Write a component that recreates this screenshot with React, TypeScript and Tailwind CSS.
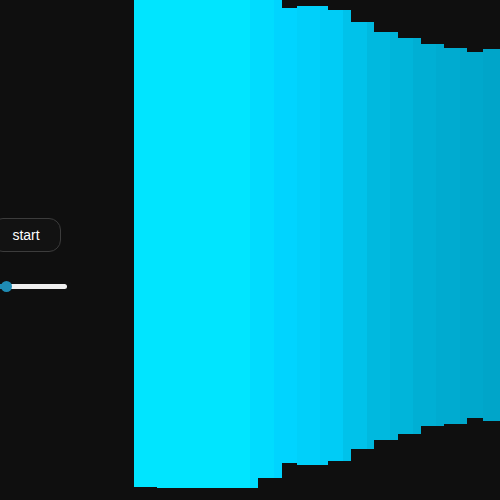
import React from "react";

// wall slices: [x0, x1, top, bottom] in view coords
const slices: [number, number, number, number][] = [
  [0, 23, -20, 487],
  [23, 124, -20, 488],
  [124, 148, -7, 478],
  [148, 163, 8, 463],
  [163, 194, 6, 465],
  [194, 217, 10, 461],
  [217, 240, 22, 449],
  [240, 264, 32, 440],
  [264, 287, 38, 434],
  [287, 310, 44, 426],
  [310, 333, 48, 424],
  [333, 349, 52, 418],
  [349, 380, 49, 421],
];

// shading bands by distance
const bands: [number, number, string][] = [
  [0, 116, "#00e5ff"],
  [116, 140, "#00dcff"],
  [140, 163, "#00d4ff"],
  [163, 186, "#00d0fa"],
  [186, 209, "#00ccf6"],
  [209, 233, "#00c2ea"],
  [233, 256, "#00b9df"],
  [256, 279, "#00b5da"],
  [279, 302, "#00afd4"],
  [302, 326, "#00abd0"],
  [326, 349, "#00a8cc"],
  [349, 380, "#00a5c9"],
];

function View() {
  return (
    <svg width={380} height={500} viewBox="0 0 380 500" className="block shrink-0" shapeRendering="crispEdges">
      <defs>
        <clipPath id="walls">
          {slices.map(([x0, x1, t, b], i) => (
            <rect key={i} x={x0} y={t} width={x1 - x0} height={b - t} />
          ))}
        </clipPath>
      </defs>
      <g clipPath="url(#walls)">
        {bands.map(([x0, x1, c], i) => (
          <rect key={i} x={x0} y={-20} width={x1 - x0} height={520} fill={c} />
        ))}
      </g>
    </svg>
  );
}

export default function App() {
  return (
    <div className="w-[500px] h-[500px] overflow-hidden bg-[#0f0f0f] flex font-['Liberation_Sans',Arial,sans-serif]">
      <aside className="w-[134px] shrink-0 pr-[82px] pt-[218px] flex flex-col items-center">
        <button className="w-[70px] h-[34px] shrink-0 rounded-[12px] border border-[#3c3c3c] bg-[#121212] text-white text-[14px] leading-none">
          start
        </button>
        <div className="mt-[29px] w-[82px] h-[11px] shrink-0 relative flex items-center">
          <div className="w-full h-[5px] rounded-full bg-[#efefef]" />
          <div className="absolute left-0 w-[20px] h-[5px] rounded-l-full bg-[#1f8bb3]" />
          <div className="absolute left-[16px] w-[11px] h-[11px] rounded-full bg-[#1f8bb3]" />
        </div>
      </aside>
      <View />
    </div>
  );
}
